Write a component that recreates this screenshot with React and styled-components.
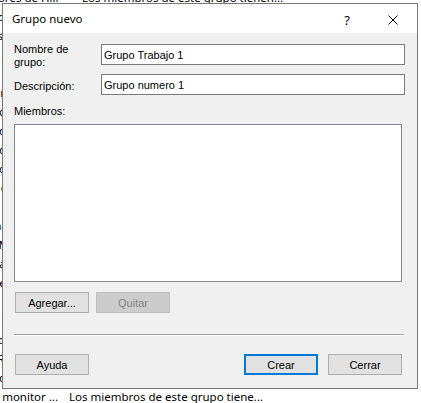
import React from 'react';
import styled, { createGlobalStyle } from 'styled-components';

const GlobalStyle = createGlobalStyle`
  html, body {
    margin: 0;
    padding: 0;
    background: #ffffff;
    overflow: hidden;
  }
`;

const Page = styled.div`
  position: relative;
  width: 421px;
  height: 403px;
  overflow: hidden;
  background: #ffffff;
`;

// the group list of the window behind the dialog, scrolled to the right
const GroupList = styled.div`
  display: flex;
  flex-direction: column;
  margin-top: -12px;
  margin-left: -68px;
  font-family: "Noto Sans", "Segoe UI", sans-serif;
  font-size: 11.5px;
  color: #000000;
`;

const GroupRow = styled.div`
  display: flex;
  align-items: center;
  height: 19px;
  white-space: nowrap;
`;

const GroupName = styled.span`
  width: ${p => p.$w || 137}px;
  flex: none;
  overflow: hidden;
`;

const GroupDesc = styled.span`
  flex: none;
`;

const Dialog = styled.div`
  position: absolute;
  left: 2px;
  top: 3px;
  width: 416px;
  height: 386px;
  box-sizing: border-box;
  border: 1px solid #777777;
  background: #f0f0f0;
  display: flex;
  flex-direction: column;
  font-family: "Liberation Sans", Arial, sans-serif;
  font-size: 11px;
  color: #000000;
`;

const TitleBar = styled.div`
  height: 29px;
  flex: none;
  background: #ffffff;
  display: flex;
  align-items: center;
  padding-left: 9px;
`;

const Title = styled.div`
  flex: 1;
  font-family: "Noto Sans", "Segoe UI", sans-serif;
  font-size: 11.5px;
`;

const CaptionButton = styled.div`
  width: ${p => p.$w}px;
  height: 29px;
  display: flex;
  align-items: center;
  justify-content: center;
  font-family: "Noto Sans", "Segoe UI", sans-serif;
  font-size: 13px;
  padding-top: 2px;
  box-sizing: border-box;
`;

const Body = styled.div`
  flex: 1;
  display: flex;
  flex-direction: column;
  padding: 11px 0 0 11px;
`;

const Form = styled.div`
  display: grid;
  grid-template-columns: 87px 304px;
  grid-template-rows: 21px 21px;
  row-gap: 9px;
`;

const Label = styled.div`
  max-width: 70px;
  line-height: 13px;
  margin-top: ${p => p.$top}px;
`;

const Input = styled.div`
  height: 21px;
  box-sizing: border-box;
  border: 1px solid #7a7a7a;
  background: #ffffff;
  padding-left: 2px;
  display: flex;
  align-items: center;
  white-space: nowrap;
`;

const SectionLabel = styled.div`
  line-height: 13px;
  margin-top: 10px;
`;

const MemberList = styled.div`
  width: 388px;
  height: 158px;
  box-sizing: border-box;
  margin-top: 6px;
  border: 1px solid #828790;
  background: #ffffff;
`;

const ButtonRow = styled.div`
  display: flex;
  gap: ${p => p.$gap}px;
  padding-left: 1px;
  margin-top: ${p => p.$top}px;
  width: 387px;
  justify-content: ${p => p.$spread ? 'space-between' : 'flex-start'};
`;

const ButtonGroup = styled.div`
  display: flex;
  gap: 10px;
`;

const Button = styled.div`
  width: 74px;
  height: 21px;
  box-sizing: border-box;
  display: flex;
  align-items: center;
  justify-content: center;
  background: ${p => p.$disabled ? '#cccccc' : '#e1e1e1'};
  border: ${p => p.$primary ? '2px solid #0078d7' : p.$disabled ? '1px solid #bfbfbf' : '1px solid #adadad'};
  color: ${p => p.$disabled ? '#838383' : '#000000'};
`;

const Separator = styled.div`
  width: 390px;
  height: 2px;
  margin-top: 21px;
  box-sizing: border-box;
  border-top: 1px solid #a0a0a0;
  border-bottom: 1px solid #ffffff;
`;

const groups = [
  ['Administradores de Hill', 'Los miembros de este grupo tienen...', 150],
  ['Administradores', 'Los administradores tienen acceso...'],
  ['Duplicadores', 'Pueden replicar archivos en un dom...'],
  ['Invitados', 'De forma predeterminada, los invit...'],
  ['IIS_IUSRS', 'Grupo integrado usado por Internet...'],
  ['Lectores del registro de eventos', 'Los miembros de este grupo pueden...'],
  ['Operadores criptográficos', 'Los miembros tienen autorización...'],
  ['Operadores de configuración', 'Los miembros en este grupo puede...'],
  ['Operadores de asistencia', 'Los miembros de este grupo pueden...'],
  ['Operadores de copia de seguridad', 'Los operadores de copia de seguri...'],
  ['Propietarios del dispositivo', 'Los miembros de este grupo pueden...'],
  ['Usuarios', 'Los usuarios no pueden hacer cam...'],
  ['Usuarios avanzados', 'Los usuarios avanzados se incluyen...'],
  ['Usuarios COM distribuidos', 'Los miembros pueden iniciar, activ...'],
  ['Usuarios de administración remota', 'Los miembros de este grupo pueden...'],
  ['Usuarios de escritorio remoto', 'A los miembros de este grupo se les...'],
  ['Usuarios del registro de rendimiento', 'Los miembros de este grupo puede...'],
  ['Invitados de System Managed', 'Los miembros de este grupo los ad...'],
  ['Administradores de Hyper-V', 'Los miembros de este grupo tienen...'],
  ['Lectores de RDS', 'Los servidores de este grupo ejec...'],
  ['Operadores de red', 'Los miembros de este grupo pueden...'],
  ['Usuarios del monitor ...', 'Los miembros de este grupo tiene...'],
];

const App = () => {
  return (
    <Page>
      <GlobalStyle />
      <GroupList>
        {groups.map(([name, desc, w], i) => (
          <GroupRow key={i}>
            <GroupName $w={w}>{name}</GroupName>
            <GroupDesc>{desc}</GroupDesc>
          </GroupRow>
        ))}
      </GroupList>

      <Dialog>
        <TitleBar>
          <Title>Grupo nuevo</Title>
          <CaptionButton $w={30}>?</CaptionButton>
          <CaptionButton $w={11} />
          <CaptionButton $w={40}>
            <svg width="10" height="10" viewBox="0 0 10 10">
              <path d="M0.5 0.5 L9.5 9.5 M9.5 0.5 L0.5 9.5" stroke="#000" strokeWidth="1" fill="none" />
            </svg>
          </CaptionButton>
          <CaptionButton $w={4} />
        </TitleBar>

        <Body>
          <Form>
            <Label $top={-1}>Nombre de grupo:</Label>
            <Input>Grupo Trabajo 1</Input>
            <Label $top={6}>Descripción:</Label>
            <Input>Grupo numero 1</Input>
          </Form>

          <SectionLabel>Miembros:</SectionLabel>
          <MemberList />

          <ButtonRow $gap={7} $top={10}>
            <Button>Agregar...</Button>
            <Button $disabled>Quitar</Button>
          </ButtonRow>

          <Separator />

          <ButtonRow $spread $top={18}>
            <Button>Ayuda</Button>
            <ButtonGroup>
              <Button $primary>Crear</Button>
              <Button>Cerrar</Button>
            </ButtonGroup>
          </ButtonRow>
        </Body>
      </Dialog>
    </Page>
  );
};

export default App;
